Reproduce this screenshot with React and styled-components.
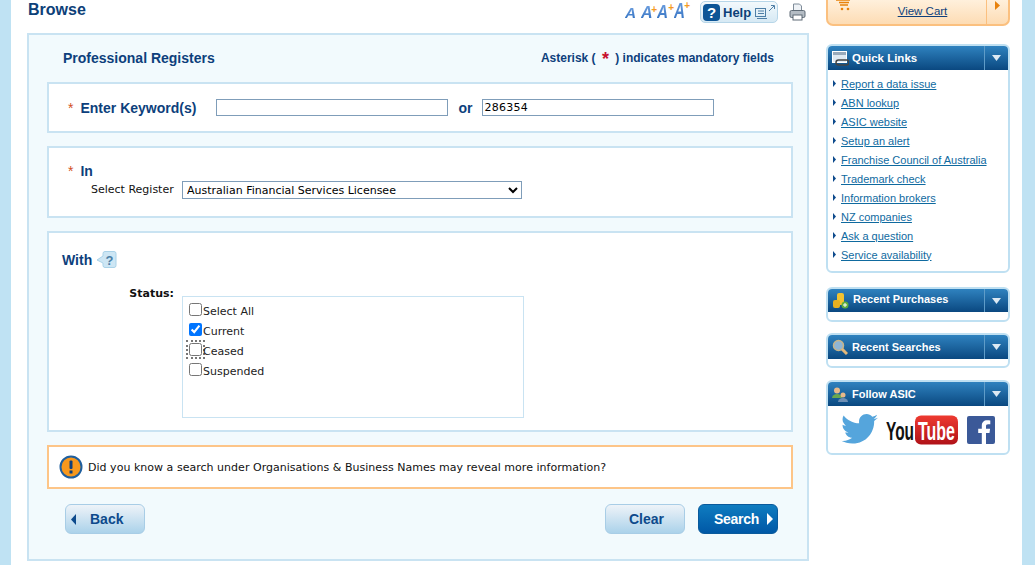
import React from "react";
import styled, { createGlobalStyle } from "styled-components";

const Global = createGlobalStyle`
  html, body { margin: 0; padding: 0; background: #fff; overflow: hidden; }
  body { font-family: "Liberation Sans", Arial, sans-serif; }
  * { box-sizing: border-box; }
`;
const Page = styled.div`
  width: 1035px; height: 565px; overflow: hidden;
  border-left: 11px solid #bfe2f3; border-right: 13px solid #bfe2f3;
  background: #fff; display: flex; padding-left: 16px;
`;
const Main = styled.main`width: 782px; flex: none; display: flex; flex-direction: column;`;
const Side = styled.aside`width: 184px; margin-left: 17px; flex: none; display: flex; flex-direction: column;`;
const TopBar = styled.div`height: 33px; display: flex; align-items: flex-start;`;
const PageTitle = styled.h1`margin: 0; padding: 0 0 0 1px; font-size: 16px; line-height: 19px; color: #0d4078; font-weight: bold;`;
const Tools = styled.div`margin-left: auto; display: flex; align-items: center; height: 24px; margin-right: 3px;`;
const FontSizes = styled.div`display: flex; align-items: baseline; align-self: flex-start; height: 24px;`;
const FontStep = styled.span`
  position: relative; display: block; width: ${p => p.$w}px; line-height: 1;
  font: italic bold ${p => p.$size}px/1 "Liberation Sans", sans-serif;
`;
const StepGlyph = styled.span`
  display: inline-block; transform-origin: left bottom; transform: scaleX(${p => p.$sx});
  background: linear-gradient(#6fa0e0, #2f6fc0); -webkit-background-clip: text; background-clip: text; color: transparent;
`;
const StepPlus = styled.span`
  position: absolute; right: ${p => p.$r}px; top: ${p => p.$t}px; font: bold 10px/10px "Liberation Sans", sans-serif; color: #f59a23;
`;
const HelpButton = styled.div`
  width: 78px; height: 22px; margin: 0 11px 0 10px; border: 1px solid #b7d6e8; border-radius: 5px;
  background: linear-gradient(#f3f9fc, #d6e9f4); display: flex; align-items: center; padding-left: 2px;
  font-size: 13px; font-weight: bold; color: #0d4078; gap: 3px;
`;
const Panel = styled.section`
  width: 782px; height: 528px; border: 2px solid #c9e3f2; background: #f2fafd;
  padding: 0 14px 0 18px; display: flex; flex-direction: column;
`;
const PanelHead = styled.div`height: 47px; padding: 0 17px 2px 16px; display: flex; align-items: center; justify-content: space-between;`;
const PanelTitle = styled.h2`margin: 0; font-size: 14px; font-weight: bold; color: #0d3f7c;`;
const Mandatory = styled.div`font-size: 12px; font-weight: bold; color: #0d3f7c; padding-right: 2px; display: flex; align-items: center; white-space: pre;`;
const Star = styled.span`color: ${p => p.$c || "#c8102e"}; font-size: ${p => p.$size || 14}px; line-height: 1; font-weight: ${p => p.$weight || "bold"}; margin: ${p => p.$margin || "0"};`;
const Box = styled.div`
  width: 746px; height: ${p => p.$h}px; margin-bottom: ${p => p.$mb}px; border: 2px solid #c9e3f2; background: #fff;
`;
const KeywordRow = styled.div`height: 47px; display: flex; align-items: center; padding-left: 19px;`;
const FieldLabel = styled.label`font-size: 14px; font-weight: bold; color: #0d3f7c;`;
const TextField = styled.div`
  width: 232px; height: 17px; border: 1px solid #7f9db9; background: #fff; margin-left: ${p => p.$ml || 0}px;
  font: 11px/15px "DejaVu Sans", sans-serif; color: #000; padding-left: 1px; letter-spacing: 0.3px;
`;
const Or = styled.span`font-size: 14px; font-weight: bold; color: #0d3f7c; margin: 0 10px;`;
const InBody = styled.div`padding: 14px 0 0 19px;`;
const SelectRow = styled.div`display: flex; align-items: center; padding-left: 23px; margin-top: 1px;`;
const SmallLabel = styled.span`font: 11px "DejaVu Sans", sans-serif; color: #111; width: 91px; padding-bottom: 2px;`;
const RegisterSelect = styled.select`
  width: 340px; height: 18px; border: 1px solid #7f9db9; background: #fff; padding: 0;
  font: 11px "DejaVu Sans", sans-serif; color: #000;
`;
const WithHead = styled.div`display: flex; align-items: center; height: 22px; margin: 16px 0 0 13px; gap: 4px; font-size: 14px; font-weight: bold; color: #0d3f7c;`;
const StatusRow = styled.div`display: flex; margin: 16px 0 0 0;`;
const StatusLabel = styled.div`width: 125px; text-align: right; font: bold 11px/14px "DejaVu Sans", sans-serif; color: #111;`;
const StatusList = styled.div`
  width: 342px; height: 122px; margin: 9px 0 0 8px; border: 1px solid #c9e3f2; background: #fff; padding: 4px 0 0 6px;
`;
const CheckRow = styled.label`display: flex; align-items: center; height: 20px; font: 11px "DejaVu Sans", sans-serif; color: #222;`;
const Check = styled.input`
  width: 13px; height: 13px; margin: 0 1px 4px 0; flex: none;
  ${p => p.$focus && "outline: 2px dotted #777; outline-offset: 1px;"}
`;
const Notice = styled.div`
  width: 746px; height: 44px; border: 2px solid #fdc588; background: #fff; display: flex; align-items: center;
  padding-left: 10px; gap: 5px; font: 11px "DejaVu Sans", sans-serif; color: #111; margin-bottom: 15px; letter-spacing: 0.025px;
`;
const Actions = styled.div`display: flex; width: 746px; padding: 0 15px 0 18px; align-items: center; gap: 13px;`;
const Btn = styled.button`
  width: 80px; height: 30px; border-radius: 6px; padding: 0 0 0 ${p => p.$pl}px; display: flex; align-items: center; gap: ${p => p.$gap || 0}px;
  font: bold 14px "Liberation Sans", sans-serif; letter-spacing: ${p => p.$primary ? "-0.3px" : "0"};
  border: 1px solid ${p => p.$primary ? "#0a5a9c" : "#a8cde6"};
  color: ${p => p.$primary ? "#fff" : "#0d4a8c"};
  background: ${p => p.$primary ? "linear-gradient(#0f7cc0, #0058a6)" : "linear-gradient(#eef3f8, #abd2ea)"};
  margin-left: ${p => p.$push ? "auto" : "0"};
`;
const Cart = styled.div`
  width: 184px; height: 26px; border: 2px solid #fbc07f; border-top: 0; border-radius: 0 0 7px 7px;
  background: linear-gradient(#fff0dc, #fddcb4); display: flex; margin-bottom: 18px;
`;
const CartMain = styled.div`
  flex: 1; position: relative; text-align: center; padding: 5px 0 0 31px; font-size: 11.5px; color: #0d3f7c; text-decoration: underline;
`;
const CartIcon = styled.svg`position: absolute; left: 8px; top: -1px;`;
const CartArrow = styled.div`width: 22px; border-left: 1px solid #fbc07f; display: flex; align-items: flex-start; justify-content: center; padding-top: 1px;`;
const Widget = styled.div`
  width: 184px; border: 2px solid #bfe0f2; border-radius: 6px; margin-bottom: ${p => p.$mb}px; background: #fff; overflow: hidden;
`;
const WidgetHead = styled.div`
  height: ${p => p.$h || 24}px; background: linear-gradient(#2f82bf, #0a4880); display: flex; align-items: center;
  font-size: ${p => p.$fs || 11}px; font-weight: bold; color: #fff; padding-left: 4px;
`;
const HeadText = styled.span`margin-left: ${p => p.$ml || 3}px; padding-bottom: ${p => p.$pb || 0}px; flex: 1; white-space: nowrap;`;
const HeadToggle = styled.div`
  width: 24px; align-self: stretch; border-left: 1px solid #5f9cc8; display: flex; align-items: center; justify-content: center;
`;
const LinkList = styled.ul`list-style: none; margin: 0; padding: 4px 0 7px 5px;`;
const LinkItem = styled.li`height: 19px; display: flex; align-items: center; font-size: 11px; gap: 5px;`;
const Anchor = styled.a`color: #0f6a9f; text-decoration: underline; white-space: nowrap;`;
const Social = styled.div`height: 47px; display: flex; align-items: center; padding-left: 13px;`;
const Empty = styled.div`height: ${p => p.$h || 7}px;`;

const Caret = () => <svg width="9" height="6"><path d="M0 0h9L4.5 6z" fill="#dce9f3" /></svg>;
const Tri = ({ c = "#0d4a8c", w = 4, h = 8, left }) => (
  <svg width={w} height={h} style={{ flex: "none" }}>
    <path d={left ? `M${w} 0V${h}L0 ${h / 2}z` : `M0 0V${h}L${w} ${h / 2}z`} fill={c} />
  </svg>
);
const links = ["Report a data issue", "ABN lookup", "ASIC website", "Setup an alert", "Franchise Council of Australia", "Trademark check", "Information brokers", "NZ companies", "Ask a question", "Service availability"];
const statuses = [["Select All"], ["Current", true], ["Ceased", false, true], ["Suspended"]];
const steps = [
  { size: 14, w: 16, sx: 1.1 },
  { size: 16, w: 16, sx: 1, r: 0, t: 0 },
  { size: 18, w: 17, sx: 0.85, r: 0, t: 0 },
  { size: 22, w: 16, sx: 0.69, r: 0, t: 1 },
];

export default function App() {
  return (
    <Page>
      <Global />
      <Main>
        <TopBar>
          <PageTitle>Browse</PageTitle>
          <Tools>
            <FontSizes>
              {steps.map(s => (
                <FontStep key={s.size} $size={s.size} $w={s.w}>
                  <StepGlyph $sx={s.sx}>A</StepGlyph>
                  {s.t !== undefined && <StepPlus $r={s.r} $t={s.t}>+</StepPlus>}
                </FontStep>
              ))}
            </FontSizes>
            <HelpButton>
              <svg width="17" height="17" viewBox="0 0 17 17"><rect width="17" height="17" rx="4" fill="#0d5596" /><text x="8.5" y="14" textAnchor="middle" fontFamily="Liberation Sans" fontWeight="bold" fontSize="15" fill="#fff">?</text></svg>
              Help
              <svg width="21" height="16" viewBox="0 0 21 16" fill="none" stroke="#4f7fa6"><rect x="1.500" y="4.500" width="10" height="8" /><path d="M4 7h6M4 9.500h6M3 14.500h10" /><path d="M15 7l5-5M17 1.500h3.500V5" /></svg>
            </HelpButton>
            <svg width="17" height="18" viewBox="0 0 17 18"><path d="M4.500 1h6l2 2v5h-8z" fill="#eef2f6" stroke="#7f8c99" /><rect x="1" y="7.500" width="15" height="7" rx="1.500" fill="#b4bcc4" stroke="#5f6b76" /><rect x="4" y="12" width="9" height="5" fill="#fff" stroke="#5f6b76" /></svg>
          </Tools>
        </TopBar>
        <Panel>
          <PanelHead>
            <PanelTitle>Professional Registers</PanelTitle>
            <Mandatory>Asterisk ( <Star $size={18} $margin="3px 3px 0">*</Star> ) indicates mandatory fields</Mandatory>
          </PanelHead>
          <Box $h={51} $mb={13}>
            <KeywordRow>
              <Star $size={14} $weight="normal" $c="#d2501e" $margin="0 7px 0 0">*</Star>
              <FieldLabel>Enter Keyword(s)</FieldLabel>
              <TextField $ml={20} />
              <Or>or</Or>
              <TextField>286354</TextField>
            </KeywordRow>
          </Box>
          <Box $h={72} $mb={13}>
            <InBody>
              <Star $size={14} $weight="normal" $c="#d2501e" $margin="0 7px 0 0">*</Star>
              <FieldLabel>In</FieldLabel>
              <SelectRow>
                <SmallLabel>Select Register</SmallLabel>
                <RegisterSelect defaultValue="a"><option value="a">Australian Financial Services Licensee</option></RegisterSelect>
              </SelectRow>
            </InBody>
          </Box>
          <Box $h={201} $mb={13}>
            <WithHead>
              With
              <svg width="21" height="18" viewBox="0 0 21 18"><path d="M1 9l6-4V2.500a2 2 0 0 1 2-2h9a2 2 0 0 1 2 2v12a2 2 0 0 1-2 2H9a2 2 0 0 1-2-2V12z" fill="#cde6f4" stroke="#a9d2e8" /><text x="13.500" y="14" textAnchor="middle" fontFamily="Liberation Sans" fontWeight="bold" fontSize="13" fill="#4b7fa6">?</text></svg>
            </WithHead>
            <StatusRow>
              <StatusLabel>Status:</StatusLabel>
              <StatusList>
                {statuses.map(([t, c, f]) => (
                  <CheckRow key={t}><Check type="checkbox" defaultChecked={!!c} $focus={f} />{t}</CheckRow>
                ))}
              </StatusList>
            </StatusRow>
          </Box>
          <Notice>
            <svg width="24" height="24" viewBox="0 0 24 24"><circle cx="12" cy="12" r="10.500" fill="#f7981d" stroke="#1f5f9e" strokeWidth="2" /><rect x="10.500" y="5.500" width="3" height="8.500" rx="1" fill="#0d3f7c" /><rect x="10.500" y="15.500" width="3" height="3" fill="#0d3f7c" /></svg>
            Did you know a search under Organisations &amp; Business Names may reveal more information?
          </Notice>
          <Actions>
            <Btn $pl={5} $gap={14}><Tri left w={5} h={11} />Back</Btn>
            <Btn $push $pl={23}>Clear</Btn>
            <Btn $primary $pl={15} $gap={8}>Search<Tri c="#fff" w={6} h={12} /></Btn>
          </Actions>
        </Panel>
      </Main>
      <Side>
        <Cart>
          <CartMain>
            <CartIcon width="18" height="12" viewBox="0 0 18 12"><path d="M0 1h14M3 3.500h10M4 6h8" stroke="#e8820c" strokeWidth="1.500" fill="none" /><circle cx="6" cy="10" r="1.300" fill="#e8820c" /><circle cx="12" cy="10" r="1.300" fill="#e8820c" /></CartIcon>
            View Cart
          </CartMain>
          <CartArrow><Tri c="#e8820c" w={5} h={9} /></CartArrow>
        </Cart>
        <Widget $mb={14}>
          <WidgetHead $fs={11.5}>
            <svg width="17" height="15" viewBox="0 0 17 15"><rect x="0.500" y="0.500" width="14" height="11" fill="#dfe9f2" stroke="#fff" /><rect x="1" y="1" width="13" height="3" fill="#9ab" /><rect x="4" y="9" width="13" height="5" rx="2.500" fill="none" stroke="#444" strokeWidth="1.500" /></svg>
            <HeadText>Quick Links</HeadText>
            <HeadToggle><Caret /></HeadToggle>
          </WidgetHead>
          <LinkList>
            {links.map(l => <LinkItem key={l}><Tri w={3} h={7} /><Anchor>{l}</Anchor></LinkItem>)}
          </LinkList>
        </Widget>
        <Widget $mb={11}>
          <WidgetHead $h={23}>
            <svg width="17" height="17" viewBox="0 0 17 17"><rect x="5" y="1" width="7" height="12" rx="2" fill="#f2c230" /><rect x="1" y="8" width="7" height="8" rx="2" fill="#e8b020" /><circle cx="13" cy="13" r="3.500" fill="#5fae3e" /><path d="M11 13h4M13 11v4" stroke="#fff" /></svg>
            <HeadText $ml={4} $pb={3}>Recent Purchases</HeadText>
            <HeadToggle><Caret /></HeadToggle>
          </WidgetHead>
          <Empty $h={8} />
        </Widget>
        <Widget $mb={12}>
          <WidgetHead>
            <svg width="16" height="17" viewBox="0 0 16 17"><circle cx="6.500" cy="6.500" r="5" fill="#8fb5d4" stroke="#c6b48a" strokeWidth="1.500" /><path d="M10 10l5 5" stroke="#e3b87a" strokeWidth="3" /></svg>
            <HeadText $ml={4}>Recent Searches</HeadText>
            <HeadToggle><Caret /></HeadToggle>
          </WidgetHead>
          <Empty />
        </Widget>
        <Widget $mb={0}>
          <WidgetHead>
            <svg width="16" height="15" viewBox="0 0 16 15"><circle cx="5" cy="3.500" r="3" fill="#e7b98a" /><path d="M0 11a5 4 0 0 1 10 0z" fill="#6aa84f" /><circle cx="11" cy="8" r="2.500" fill="#e7b98a" /><path d="M6 15a5 4 0 0 1 10 0z" fill="#6d8fb5" /></svg>
            <HeadText $ml={4}>Follow ASIC</HeadText>
            <HeadToggle><Caret /></HeadToggle>
          </WidgetHead>
          <Social>
            <svg width="37" height="31" viewBox="0 0 24 20" style={{ marginRight: 7 }}><path d="M24 2.400c-.9.400-1.800.700-2.800.800 1-.6 1.800-1.600 2.200-2.700-1 .6-2 1-3.100 1.200C19.300.6 18 0 16.600 0c-2.700 0-4.900 2.200-4.900 4.900 0 .4 0 .8.100 1.100C7.700 5.800 4.100 3.900 1.700.9c-.4.700-.7 1.600-.7 2.500 0 1.700.9 3.200 2.200 4.100-.8 0-1.600-.2-2.200-.6v.1c0 2.400 1.700 4.400 3.900 4.800-.4.100-.8.200-1.300.2-.3 0-.6 0-.9-.1.600 2 2.400 3.400 4.600 3.400-1.700 1.300-3.800 2.100-6.100 2.100-.4 0-.8 0-1.200-.1C2.200 18.300 4.800 19.100 7.500 19.100c9.100 0 14-7.500 14-14v-.6c1-.7 1.800-1.500 2.500-2.100z" fill="#55a5dc" /></svg>
            <svg width="73" height="30" viewBox="0 0 73 30" style={{ marginRight: 9 }}>
              <defs><linearGradient id="yt" x1="0" y1="0" x2="0" y2="1"><stop offset="0" stopColor="#ee3a30" /><stop offset="1" stopColor="#b01218" /></linearGradient></defs>
              <text x="1" y="25" fontFamily="Liberation Sans" fontWeight="bold" fontSize="26" textLength="28" lengthAdjust="spacingAndGlyphs" fill="#111">You</text>
              <rect x="30" y="0.500" width="43" height="29" rx="6" fill="url(#yt)" />
              <text x="33" y="25" fontFamily="Liberation Sans" fontWeight="bold" fontSize="26" textLength="37" lengthAdjust="spacingAndGlyphs" fill="#fff">Tube</text>
            </svg>
            <svg width="28" height="28" viewBox="0 0 28 28"><rect width="28" height="28" rx="2" fill="#3b5998" /><path d="M19 28V17h3.500l.6-4.200H19v-2.600c0-1.200.4-2 2.100-2h2.200V4.400c-.4 0-1.700-.2-3.200-.2-3.100 0-5.300 1.900-5.300 5.500v3.100h-3.600V17h3.600v11z" fill="#fff" /></svg>
          </Social>
        </Widget>
      </Side>
    </Page>
  );
}
